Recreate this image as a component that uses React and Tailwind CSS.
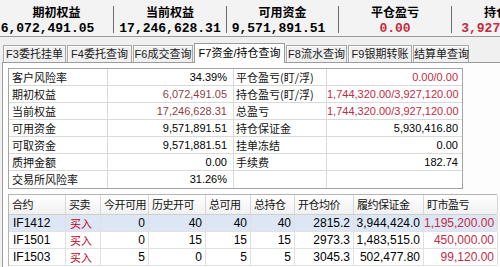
const summary = [
  { label: "期初权益", value: "6,072,491.05", w: "w-[113px]", shift: "mr-[18px]" },
  { label: "当前权益", value: "17,246,628.31", w: "w-[112px]", shift: "" },
  { label: "可用资金", value: "9,571,891.51", w: "w-[111px]", shift: "mr-[8px]" },
  { label: "平仓盈亏", value: "0.00", w: "w-[112px]", red: true, shift: "" },
  { label: "持仓盈亏", value: "3,927,120.00", w: "w-[112px]", red: true, shift: "" },
];

const tabs = [
  { text: "F3委托挂单", w: "w-[63px]" },
  { text: "F4委托查询", w: "w-[65px]" },
  { text: "F6成交查询", w: "w-[60px]" },
  { text: "F7资金/持仓查询", w: "w-[91px]", active: true },
  { text: "F8流水查询", w: "w-[61px]" },
  { text: "F9银期转账", w: "w-[64px]" },
  { text: "结算单查询", w: "w-[56px]" },
];

const fundRows = [
  ["客户风险率", "34.39%", "", "平仓盈亏(盯/浮)", "0.00/0.00", "red"],
  ["期初权益", "6,072,491.05", "brown", "持仓盈亏(盯/浮)", "1,744,320.00/3,927,120.00", "red"],
  ["当前权益", "17,246,628.31", "brown", "总盈亏", "1,744,320.00/3,927,120.00", "red"],
  ["可用资金", "9,571,891.51", "", "持仓保证金", "5,930,416.80", ""],
  ["可取资金", "9,571,881.51", "", "挂单冻结", "0.00", ""],
  ["质押金额", "0.00", "", "手续费", "182.74", ""],
  ["交易所风险率", "31.26%", "", "", "", ""],
];

const tone = {
  "": "text-black",
  brown: "text-[#8e3f44]",
  red: "text-[#c02c44]",
};

const posCols = [
  { name: "合约", w: "w-[57px]", left: true },
  { name: "买卖", w: "w-[35px]", left: true },
  { name: "今开可用", w: "w-[48px]" },
  { name: "历史开可", w: "w-[57px]" },
  { name: "总可用", w: "w-[45px]" },
  { name: "总持仓", w: "w-[44px]" },
  { name: "开仓均价", w: "w-[59px]" },
  { name: "履约保证金", w: "w-[70px]" },
  { name: "盯市盈亏", w: "w-[74px]" },
];

const positions = [
  ["IF1412", "买入", "0", "40", "40", "40", "2815.2", "3,944,424.0", "1,195,200.00"],
  ["IF1501", "买入", "0", "15", "15", "15", "2973.3", "1,483,515.0", "450,000.00"],
  ["IF1503", "买入", "5", "0", "5", "5", "3045.3", "502,477.80", "99,120.00"],
];

const App = () => {
  return (
    <div className="w-[500px] h-[267px] overflow-hidden bg-[#f0f0f0] text-black font-['Liberation_Sans','Noto_Sans_CJK_SC',sans-serif]">
      {/* Summary bar */}
      <div className="flex h-[37px] bg-[#f3f3f3] border-b border-[#9a9a9a]">
        {summary.map((s, i) => (
          <div key={s.label} className="flex shrink-0">
            {i > 0 && <div className="w-px h-[27px] mt-[6px] bg-[#6c6c6c]" />}
            <div className={`${s.w} flex flex-col items-center pt-[5px]`}>
              <div className="text-[12px] leading-[14px] font-bold font-['Noto_Sans_CJK_SC',sans-serif]">
                {s.label}
              </div>
              <div
                className={`mt-[2px] text-[13px] leading-[16px] font-bold whitespace-nowrap font-['Liberation_Mono',monospace] ${s.shift} ${
                  s.red ? "text-[#c42a40]" : "text-black"
                }`}
              >
                {s.value}
              </div>
            </div>
          </div>
        ))}
      </div>

      {/* Tabs */}
      <div className="flex items-end gap-px h-[25px] pl-[3px]">
        {tabs.map((t) =>
          t.active ? (
            <div
              key={t.text}
              className={`${t.w} h-[20px] -mb-px relative z-10 bg-white border border-b-0 border-[#9c9c9c] text-[11px] leading-[18px] text-center whitespace-nowrap`}
            >
              {t.text}
            </div>
          ) : (
            <div
              key={t.text}
              className={`${t.w} h-[17px] bg-[#f0f0f0] border border-b-0 border-[#a8a8a8] shadow-[inset_1px_1px_0_#ffffff] text-[11px] leading-[16px] text-center whitespace-nowrap text-[#202020]`}
            >
              {t.text}
            </div>
          )
        )}
      </div>

      {/* Panel */}
      <div className="ml-[2px] h-[220px] border-t border-l border-[#9c9c9c] bg-[#fdfdfd] pt-[5px] pl-[5px]">
        {/* Funds table */}
        <div className="w-[455px] border border-[#a4a4a4] bg-white">
          {fundRows.map((r, i) => (
            <div
              key={r[0]}
              className={`flex h-[17px] leading-[16px] ${
                i < fundRows.length - 1 ? "border-b border-[#dadada]" : ""
              }`}
            >
              <div className="w-[99px] shrink-0 pl-[3px] border-r border-[#dadada] font-['Noto_Sans_CJK_SC',sans-serif] text-[11px] text-[#111]">
                {r[0]}
              </div>
              <div className={`w-[126px] shrink-0 pr-[6px] text-right text-[11px] border-r border-[#dadada] ${tone[r[2]]}`}>
                {r[1]}
              </div>
              <div className="w-[93px] shrink-0 pl-[2px] border-r border-[#dadada] whitespace-nowrap font-['Noto_Sans_CJK_SC',sans-serif] text-[11px] text-[#111]">
                {r[3]}
              </div>
              <div className={`flex-1 pr-[4px] text-right text-[11px] whitespace-nowrap ${tone[r[5]]}`}>
                {r[4]}
              </div>
            </div>
          ))}
        </div>

        {/* Positions table */}
        <div className="mt-[5px] w-[489px] border-t border-l border-[#b4b4b4] bg-white">
          <div className="flex h-[20px] bg-gradient-to-b from-white to-[#f1f1f1] border-b border-[#cfcfcf]">
            {posCols.map((c) => (
              <div
                key={c.name}
                className={`${c.w} shrink-0 pl-[3px] border-r border-[#d6d6d6] text-[11px] leading-[19px] tracking-[-0.5px] whitespace-nowrap overflow-hidden font-['Noto_Sans_CJK_SC',sans-serif] text-[#111]`}
              >
                {c.name}
              </div>
            ))}
          </div>
          {positions.map((p, ri) => (
            <div
              key={p[0]}
              className={`flex h-[17px] border-b border-[#e2e2e2] ${ri === 0 ? "bg-[#dce6f4]" : "bg-white"}`}
            >
              {p.map((v, ci) => {
                const c = posCols[ci];
                let color = "text-black";
                if (ci === 1) color = "text-[#c00018]";
                if (ci === 8) color = "text-[#c02c44]";
                return (
                  <div
                    key={ci}
                    className={`${c.w} shrink-0 border-r border-[#e0e0e0] leading-[16px] whitespace-nowrap ${color} ${
                      c.left ? "pl-[4px] text-left" : "pr-[3px] text-right"
                    } ${ci === 1 ? "text-[11px] font-['Noto_Sans_CJK_SC',sans-serif]" : "text-[12px]"}`}
                  >
                    {v}
                  </div>
                );
              })}
            </div>
          ))}
        </div>
      </div>
    </div>
  );
};

export default App;
